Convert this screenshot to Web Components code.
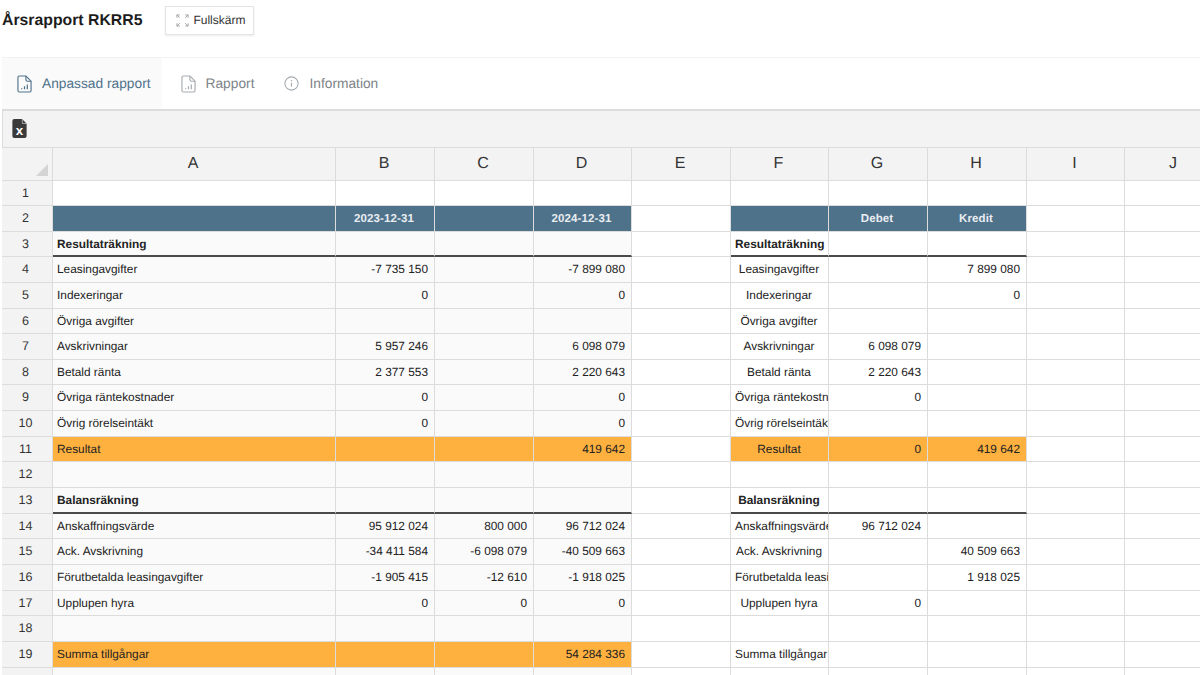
<!DOCTYPE html>
<html lang="sv">
<head>
<meta charset="utf-8">
<title>Årsrapport RKRR5</title>
<style>
    html, body { margin: 0; height: 100%; overflow: hidden; background: #fff; }
    body { font-family: "Liberation Sans", Arial, sans-serif; color: #222; text-rendering: geometricPrecision; }
</style>
</head>
<body>

<report-page>
    <report-header slot="header" title="Årsrapport RKRR5">
        <report-button>
            <svg slot="icon" width="13" height="13" viewBox="0 0 14 14" fill="none" stroke="#9aa0a5" stroke-width="1">
                <path d="M1 4V1h3M1 1l3 3M10 1h3v3M13 1l-3 3M1 10v3h3M1 13l3-3M13 10v3h-3M13 13l-3-3"/>
            </svg>
            Fullskärm
        </report-button>
    </report-header>
    <report-tabs slot="tabs">
        <report-tab active>
            <svg slot="icon" width="15" height="18" viewBox="0 0 16 19" fill="none" stroke="#4f728b" stroke-width="1.2">
                <path d="M2.500 1h7l5.500 5.500V16.500a1.500 1.500 0 0 1-1.500 1.500h-11A1.500 1.500 0 0 1 1 16.500v-14A1.500 1.500 0 0 1 2.500 1z"/>
                <path d="M9.500 1v4a1.500 1.500 0 0 0 1.500 1.500H15"/>
                <path d="M5 15v-1M8 15v-3M11 15v-5" stroke-width="1.300"/>
            </svg>
            Anpassad rapport
        </report-tab>
        <report-tab>
            <svg slot="icon" width="15" height="18" viewBox="0 0 16 19" fill="none" stroke="#a6abb0" stroke-width="1.2">
                <path d="M2.500 1h7l5.500 5.500V16.500a1.500 1.500 0 0 1-1.500 1.500h-11A1.500 1.500 0 0 1 1 16.500v-14A1.500 1.500 0 0 1 2.500 1z"/>
                <path d="M9.500 1v4a1.500 1.500 0 0 0 1.500 1.500H15"/>
                <path d="M5 15v-1M8 15v-3M11 15v-5" stroke-width="1.300"/>
            </svg>
            Rapport
        </report-tab>
        <report-tab>
            <svg slot="icon" width="15" height="15" viewBox="0 0 17 17" fill="none" stroke="#a6abb0" stroke-width="1.2">
                <circle cx="8.500" cy="8.500" r="7.500"/>
                <path d="M8.500 7.500v4.500" stroke-width="1.300"/>
                <path d="M8.500 4.500v1.300" stroke-width="1.400"/>
            </svg>
            Information
        </report-tab>
    </report-tabs>
    <sheet-toolbar slot="toolbar">
        <svg width="15" height="19" viewBox="0 0 15 20">
            <path d="M2 0h8l5 5v13a2 2 0 0 1-2 2H2a2 2 0 0 1-2-2V2a2 2 0 0 1 2-2z" fill="#3a3a3a"/>
            <path d="M10 0l5 5h-4a1 1 0 0 1-1-1z" fill="#f3f3f3"/>
            <path d="M10.600 0.600l3.800 3.800h-3.800z" fill="#3a3a3a"/>
            <text x="7.500" y="17" text-anchor="middle" font-family="Liberation Sans, sans-serif" font-weight="700" font-size="14" fill="#fff">x</text>
        </svg>
    </sheet-toolbar>
    <sheet-grid slot="sheet"></sheet-grid>
</report-page>

<script>
class ReportPage extends HTMLElement {
    constructor() {
        super();
        this.attachShadow({ mode: "open" });
        this.shadowRoot.innerHTML = `
        <style>
            :host { display: flex; flex-direction: column; height: 100vh; overflow: hidden; }
            .body { display: flex; flex-direction: column; flex: 1; margin-left: 2px; min-height: 0; }
        </style>
        <slot name="header"></slot>
        <div class="body">
            <slot name="tabs"></slot>
            <slot name="toolbar"></slot>
            <slot name="sheet"></slot>
        </div>
        `;
    }
}

class ReportHeader extends HTMLElement {
    constructor() {
        super();
        this.attachShadow({ mode: "open" });
    }

    connectedCallback() {
        this.shadowRoot.innerHTML = `
        <style>
            :host {
                display: flex;
                align-items: center;
                gap: 23px;
                height: 57px;
                padding: 0 0 17px 2px;
                box-sizing: border-box;
            }
            h1 { margin: 2px 0 0; font-size: 15.800px; font-weight: 700; color: #1c1c1c; white-space: nowrap; }
        </style>
        <h1>${this.getAttribute("title")}</h1>
        <slot></slot>
        `;
    }
}

class ReportButton extends HTMLElement {
    constructor() {
        super();
        this.attachShadow({ mode: "open" });
        this.shadowRoot.innerHTML = `
        <style>
            :host {
                display: inline-flex;
                align-items: center;
                gap: 4px;
                height: 29px;
                padding: 0 8px 0 10px;
                box-sizing: border-box;
                font-size: 12px;
                color: #333;
                background: #fff;
                border: 1px solid #e4e4e4;
                box-shadow: 0 1px 2px rgba(0, 0, 0, .08);
            }
            ::slotted(svg) { flex: none; }
        </style>
        <slot name="icon"></slot><slot></slot>
        `;
    }
}

class ReportTabs extends HTMLElement {
    constructor() {
        super();
        this.attachShadow({ mode: "open" });
        this.shadowRoot.innerHTML = `
        <style>
            :host {
                display: flex;
                gap: 4px;
                height: 52px;
                box-sizing: border-box;
                border-top: 1px solid #f2f2f2;
            }
        </style>
        <slot></slot>
        `;
    }
}

class ReportTab extends HTMLElement {
    constructor() {
        super();
        this.attachShadow({ mode: "open" });
        this.shadowRoot.innerHTML = `
        <style>
            :host {
                display: flex;
                align-items: center;
                gap: 10px;
                padding: 0 11px 0 15px;
                font-size: 13.750px;
                color: #7d8388;
                white-space: nowrap;
            }
            :host([active]) {
                color: #4f728b;
                background: #fafafa;
            }
        </style>
        <slot name="icon"></slot><slot></slot>
        `;
    }
}

class SheetToolbar extends HTMLElement {
    constructor() {
        super();
        this.attachShadow({ mode: "open" });
        this.shadowRoot.innerHTML = `
        <style>
            :host {
                display: flex;
                align-items: center;
                height: 39px;
                padding: 0 0 1px 9px;
                box-sizing: border-box;
                background: #f3f3f3;
                border: 1px solid #dcdcdc;
                border-top-width: 2px;
                border-right: none;
            }
        </style>
        <slot></slot>
        `;
    }
}

class SheetGrid extends HTMLElement {
    constructor() {
        super();
        this.attachShadow({ mode: "open" });
        this.columns = ["A", "B", "C", "D", "E", "F", "G", "H", "I", "J"];

        // [A, B, C, D, F, G, H, kind]
        this.rows = [
            ["", "", "", "", "", "", "", "blank"],
            ["", "2023-12-31", "", "2024-12-31", "", "Debet", "Kredit", "head"],
            ["Resultaträkning", "", "", "", "Resultaträkning", "", "", "section"],
            ["Leasingavgifter", "-7 735 150", "", "-7 899 080", "Leasingavgifter", "", "7 899 080"],
            ["Indexeringar", "0", "", "0", "Indexeringar", "", "0"],
            ["Övriga avgifter", "", "", "", "Övriga avgifter", "", ""],
            ["Avskrivningar", "5 957 246", "", "6 098 079", "Avskrivningar", "6 098 079", ""],
            ["Betald ränta", "2 377 553", "", "2 220 643", "Betald ränta", "2 220 643", ""],
            ["Övriga räntekostnader", "0", "", "0", "Övriga räntekostnader", "0", ""],
            ["Övrig rörelseintäkt", "0", "", "0", "Övrig rörelseintäkt", "", ""],
            ["Resultat", "", "", "419 642", "Resultat", "0", "419 642", "total"],
            ["", "", "", "", "", "", ""],
            ["Balansräkning", "", "", "", "Balansräkning", "", "", "section"],
            ["Anskaffningsvärde", "95 912 024", "800 000", "96 712 024", "Anskaffningsvärde", "96 712 024", ""],
            ["Ack. Avskrivning", "-34 411 584", "-6 098 079", "-40 509 663", "Ack. Avskrivning", "", "40 509 663"],
            ["Förutbetalda leasingavgifter", "-1 905 415", "-12 610", "-1 918 025", "Förutbetalda leasingavgifter", "", "1 918 025"],
            ["Upplupen hyra", "0", "0", "0", "Upplupen hyra", "0", ""],
            ["", "", "", "", "", "", ""],
            ["Summa tillgångar", "", "", "54 284 336", "Summa tillgångar", "", "", "sum"],
            ["", "", "", "", "", "", ""],
        ];
    }

    connectedCallback() {
        this.render();
    }

    cell(text, classes) {
        return `<div class="c ${classes}">${text}</div>`;
    }

    renderRow(row, index) {
        const kind = row[7] || "";
        const [a, b, c, d, f, g, h] = row;
        const leftBg = kind === "blank" ? "" : "soft";
        const left = (kind === "head" || kind === "total" || kind === "sum") ? kind : (kind === "section" ? `${leftBg} rule` : leftBg);
        const right = kind === "head" || kind === "total" ? kind : (kind === "section" ? "rule" : "");

        return [
            `<div class="c rowhead">${index + 1}</div>`,
            this.cell(a, `${left} first ${kind === "section" ? "bold" : ""}`),
            this.cell(b, `${left} num`),
            this.cell(c, `${left} num`),
            this.cell(d, `${left} num`),
            this.cell("", ""),
            this.cell(f, `${right} mid ${kind === "section" ? "bold" : ""}`),
            this.cell(g, `${right} num`),
            this.cell(h, `${right} num`),
            this.cell("", ""),
            this.cell("", ""),
        ].join("");
    }

    render() {
        const style = `
        <style>
            :host { display: block; flex: 1; min-height: 0; overflow: hidden; background: #fff; }
            .grid {
                display: grid;
                width: 1222px;
                grid-template-columns: 51px 283px 99px 99px 98px 99px 98px 99px 99px 98px 99px;
                grid-template-rows: 33px 25px;
                grid-auto-rows: 25.650px;
                font-size: 11.850px;
                color: #222;
            }
            .c {
                box-sizing: border-box;
                min-width: 0;
                overflow: hidden;
                white-space: nowrap;
                padding: 0 5px;
                line-height: 25px;
                border-right: 1px solid #dcdcdc;
                border-bottom: 1px solid #dcdcdc;
            }
            .first { padding-left: 4px; }
            .col, .corner {
                background: #f3f3f3;
                font-size: 16px;
                line-height: 31px;
                text-align: center;
                color: #333;
                padding: 0 7px 0 5px;
            }
            .corner { position: relative; }
            .corner::after {
                content: "";
                position: absolute;
                right: 4px;
                bottom: 4px;
                border-left: 12px solid transparent;
                border-bottom: 12px solid #d4d4d4;
            }
            .rowhead { background: #f3f3f3; text-align: center; font-size: 12.500px; color: #333; padding: 0 3px 0 0; }
            .soft { background: #fafafa; }
            .num { text-align: right; padding-right: 6px; }
            .mid { text-align: center; padding: 0 5px 0 4px; }
            .bold { font-weight: 700; }
            .head {
                background: #4f728b;
                color: #e8edf1;
                font-weight: 700;
                font-size: 11.500px;
                letter-spacing: .1px;
                line-height: 26px;
                text-align: center;
                padding: 0 7px 0 5px;
            }
            .total, .sum { background: #ffb13f; }
            .rule { border-bottom: 2px solid #4a4a4a; }
        </style>
        `;

        const head = `<div class="c corner"></div>` + this.columns
            .map((name) => `<div class="c col">${name}</div>`)
            .join("");
        const body = this.rows.map((row, i) => this.renderRow(row, i)).join("");

        this.shadowRoot.innerHTML = style + `<div class="grid">${head}${body}</div>`;
    }
}

customElements.define("report-page", ReportPage);
customElements.define("report-header", ReportHeader);
customElements.define("report-button", ReportButton);
customElements.define("report-tabs", ReportTabs);
customElements.define("report-tab", ReportTab);
customElements.define("sheet-toolbar", SheetToolbar);
customElements.define("sheet-grid", SheetGrid);
</script>
</body>
</html>
